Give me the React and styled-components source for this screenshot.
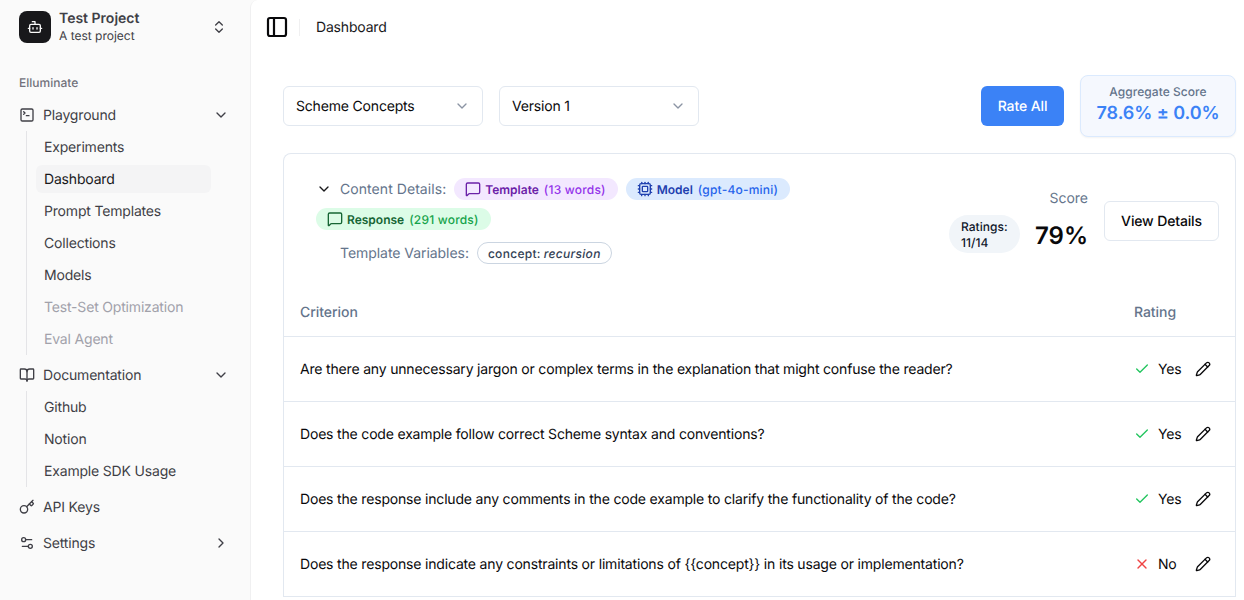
import styled, { createGlobalStyle } from "styled-components";
import {
  Bot,
  BookOpen,
  Check,
  ChevronDown,
  ChevronRight,
  ChevronsUpDown,
  Cpu,
  Key,
  MessageSquare,
  PanelLeft,
  Pencil,
  Settings2,
  SquareTerminal,
  X,
} from "lucide-react";

const GlobalStyle = createGlobalStyle`
  html, body {
    margin: 0;
    height: 600px;
    overflow: hidden;
    font-family: Inter, "Liberation Sans", sans-serif;
    font-size: 14px;
    letter-spacing: -0.18px;
    color: #09090b;
    background: #fafafa;
    text-rendering: geometricPrecision;
  }
  * { box-sizing: border-box; }
  button { text-rendering: geometricPrecision; }
`;

const Layout = styled.div`
  display: flex;
  width: 1244px;
  height: 600px;
  overflow: hidden;
`;

const Sidebar = styled.aside`
  width: 250px;
  flex-shrink: 0;
  padding: 8px;
  background: #fafafa;
`;

const ProjectButton = styled.div`
  display: flex;
  align-items: center;
  height: 38px;
  padding: 0 15px 0 11px;
  margin-bottom: 20px;
  svg { color: #3f3f46; }
`;

const ProjectLogo = styled.div`
  width: 32px;
  height: 32px;
  border-radius: 8px;
  background: #18181b;
  display: flex;
  align-items: center;
  justify-content: center;
  svg { color: #fafafa; }
`;

const ProjectText = styled.div`
  flex: 1;
  margin-left: 8px;
  line-height: 17px;
`;

const ProjectName = styled.div`
  font-size: 14px;
  font-weight: 600;
  letter-spacing: 0;
  color: #3f3f46;
`;

const ProjectSub = styled.div`
  font-size: 12px;
  letter-spacing: 0;
  color: #3f3f46;
`;

const GroupLabel = styled.div`
  height: 33px;
  padding: 0 11px;
  display: flex;
  align-items: center;
  font-size: 12px;
  font-weight: 500;
  letter-spacing: 0;
  color: #71717a;
`;

const Menu = styled.div`
  display: flex;
  flex-direction: column;
  gap: 4px;
`;

const MenuRow = styled.div`
  display: flex;
  align-items: center;
  height: 32px;
  padding: 0 13px 0 11px;
  gap: 8px;
  color: #3f3f46;
  svg { flex-shrink: 0; }
`;

const MenuLabel = styled.span`
  flex: 1;
`;

const SubList = styled.div`
  display: flex;
  flex-direction: column;
  margin: 0 31px 0 18px;
  padding-left: 9px;
  border-left: 1px solid #e4e4e7;
`;

const SubItem = styled.div`
  height: 28px;
  margin: 2px 0;
  display: flex;
  align-items: center;
  padding: 0 8px;
  border-radius: 6px;
  color: ${(p) => (p.$disabled ? "#a1a1aa" : p.$active ? "#18181b" : "#3f3f46")};
  background: ${(p) => (p.$active ? "#f4f4f5" : "transparent")};
`;

const Main = styled.main`
  flex: 1;
  min-width: 0;
  background: #fff;
  border-left: 1px solid #f0f0f1;
  border-top-left-radius: 8px;
`;

const TopBar = styled.header`
  display: flex;
  align-items: center;
  height: 54px;
  padding-left: 14px;
`;

const Divider = styled.div`
  width: 1px;
  height: 17px;
  background: #f0f0f1;
  margin: 0 16px 0 10px;
`;

const Crumb = styled.span`
  color: #18181b;
`;

const Content = styled.div`
  padding: 21px 8px 0 32px;
`;

const Toolbar = styled.div`
  display: flex;
  align-items: center;
  gap: 16px;
  margin-bottom: 16px;
`;

const Select = styled.div`
  width: 200px;
  height: 40px;
  display: flex;
  align-items: center;
  justify-content: space-between;
  padding: 0 12px;
  border: 1px solid #e2e8f0;
  border-radius: 6px;
  color: #09090b;
  svg { color: #8b94a3; }
`;

const ToolbarRight = styled.div`
  margin-left: auto;
  display: flex;
  align-items: center;
  gap: 16px;
`;

const PrimaryButton = styled.button`
  width: 83px;
  height: 40px;
  border: 0;
  border-radius: 6px;
  background: #3b82f6;
  color: #fff;
  font: 500 14px Inter, sans-serif;
  letter-spacing: -0.1px;
`;

const ScoreBox = styled.div`
  width: 156px;
  height: 62px;
  border: 1px solid #dbeafe;
  border-radius: 8px;
  background: #f5f8fe;
  box-shadow: 0 1px 2px rgba(0, 0, 0, 0.05);
  text-align: center;
  padding-top: 8px;
`;

const ScoreCaption = styled.div`
  font-size: 12px;
  line-height: 16px;
  font-weight: 500;
  letter-spacing: 0.05px;
  color: #64748b;
`;

const ScoreValue = styled.div`
  font-size: 18px;
  line-height: 28px;
  font-weight: 600;
  letter-spacing: -0.08px;
  color: #3b82f6;
`;

const Card = styled.section`
  border: 1px solid #e2e8f0;
  border-bottom: 0;
  border-radius: 8px 8px 0 0;
`;

const CardHead = styled.div`
  display: flex;
  align-items: center;
  padding: 24px 16px 24px 32px;
`;

const Details = styled.div`
  flex: 1;
  min-width: 0;
`;

const PillRow = styled.div`
  display: flex;
  flex-wrap: wrap;
  align-items: center;
  gap: 8px;
`;

const DetailLabel = styled.div`
  display: flex;
  align-items: center;
  gap: 8px;
  letter-spacing: 0.06px;
  color: #64748b;
  svg { color: #18181b; }
`;

const Pill = styled.div`
  display: flex;
  align-items: center;
  height: 22px;
  padding: 0 12px 0 11px;
  gap: 4px;
  border-radius: 11px;
  font-size: 12px;
  font-weight: 600;
  letter-spacing: 0;
  background: ${(p) => p.$bg};
  color: ${(p) => p.$strong};
`;

const PillNote = styled.span`
  font-weight: 500;
  letter-spacing: 0.2px;
  margin-left: 1px;
  color: ${(p) => p.$color};
`;

const VariableRow = styled.div`
  display: flex;
  align-items: center;
  gap: 8px;
  margin: 12px 0 0 24px;
  letter-spacing: -0.05px;
  color: #64748b;
`;

const VariablePill = styled.div`
  height: 22px;
  padding: 0 10px;
  display: flex;
  align-items: center;
  gap: 3px;
  border: 1px solid #cbd5e1;
  border-radius: 11px;
  font-size: 12px;
  font-weight: 500;
  letter-spacing: 0.3px;
  color: #334155;
  em { font-style: italic; }
`;

const Summary = styled.div`
  display: flex;
  align-items: center;
`;

const RatingsPill = styled.div`
  width: 71px;
  height: 38px;
  margin-top: 26px;
  padding: 4px 0 0 12px;
  border-radius: 19px;
  background: #f1f5f9;
  font-size: 12px;
  line-height: 16px;
  font-weight: 500;
  letter-spacing: 0.05px;
  color: #0f172a;
`;

const ScoreCol = styled.div`
  margin: 0 16px 0 15px;
  padding-bottom: 1px;
  text-align: right;
`;

const ScoreLabel = styled.div`
  color: #64748b;
  line-height: 20px;
  letter-spacing: 0;
  margin-bottom: 11px;
`;

const ScorePercent = styled.div`
  font-size: 24px;
  line-height: 32px;
  font-weight: 600;
  letter-spacing: 0;
  color: #09090b;
`;

const OutlineButton = styled.button`
  width: 115px;
  height: 40px;
  border: 1px solid #e2e8f0;
  border-radius: 6px;
  background: #fff;
  color: #09090b;
  font: 500 14px Inter, sans-serif;
  letter-spacing: -0.14px;
`;

const Table = styled.div`
  display: flex;
  flex-direction: column;
`;

const TableHead = styled.div`
  display: grid;
  grid-template-columns: 1fr 101px;
  align-items: center;
  height: 49px;
  padding-left: 16px;
  color: #64748b;
  font-weight: 500;
  letter-spacing: -0.05px;
  border-bottom: 1px solid #e2e8f0;
`;

const TableRow = styled.div`
  display: grid;
  grid-template-columns: 1fr 101px;
  align-items: center;
  height: 65px;
  padding-left: 16px;
  border-bottom: 1px solid #e2e8f0;
  color: #09090b;
`;

const RatingCell = styled.div`
  display: flex;
  align-items: center;
  color: #09090b;
`;

const RatingIcon = styled.span`
  display: flex;
  width: 24px;
  color: ${(p) => (p.$yes ? "#22c55e" : "#ef4444")};
`;

const RatingText = styled.span`
  width: 37px;
`;

const criteria = [
  ["Are there any unnecessary jargon or complex terms in the explanation that might confuse the reader?", true],
  ["Does the code example follow correct Scheme syntax and conventions?", true],
  ["Does the response include any comments in the code example to clarify the functionality of the code?", true],
  ["Does the response indicate any constraints or limitations of {{concept}} in its usage or implementation?", false],
];

export default function App() {
  return (
    <Layout>
      <GlobalStyle />
      <Sidebar>
        <ProjectButton>
          <ProjectLogo>
            <Bot size={16} />
          </ProjectLogo>
          <ProjectText>
            <ProjectName>Test Project</ProjectName>
            <ProjectSub>A test project</ProjectSub>
          </ProjectText>
          <ChevronsUpDown size={16} />
        </ProjectButton>
        <GroupLabel>Elluminate</GroupLabel>
        <Menu>
          <div>
            <MenuRow>
              <SquareTerminal size={16} />
              <MenuLabel>Playground</MenuLabel>
              <ChevronDown size={16} />
            </MenuRow>
            <SubList>
              <SubItem>Experiments</SubItem>
              <SubItem $active>Dashboard</SubItem>
              <SubItem>Prompt Templates</SubItem>
              <SubItem>Collections</SubItem>
              <SubItem>Models</SubItem>
              <SubItem $disabled>Test-Set Optimization</SubItem>
              <SubItem $disabled>Eval Agent</SubItem>
            </SubList>
          </div>
          <div>
            <MenuRow>
              <BookOpen size={16} />
              <MenuLabel>Documentation</MenuLabel>
              <ChevronDown size={16} />
            </MenuRow>
            <SubList>
              <SubItem>Github</SubItem>
              <SubItem>Notion</SubItem>
              <SubItem>Example SDK Usage</SubItem>
            </SubList>
          </div>
          <MenuRow>
            <Key size={16} />
            <MenuLabel>API Keys</MenuLabel>
          </MenuRow>
          <MenuRow>
            <Settings2 size={16} />
            <MenuLabel>Settings</MenuLabel>
            <ChevronRight size={16} />
          </MenuRow>
        </Menu>
      </Sidebar>
      <Main>
        <TopBar>
          <PanelLeft size={24} strokeWidth={2.2} />
          <Divider />
          <Crumb>Dashboard</Crumb>
        </TopBar>
        <Content>
          <Toolbar>
            <Select>
              Scheme Concepts
              <ChevronDown size={16} />
            </Select>
            <Select>
              Version 1
              <ChevronDown size={16} />
            </Select>
            <ToolbarRight>
              <PrimaryButton>Rate All</PrimaryButton>
              <ScoreBox>
                <ScoreCaption>Aggregate Score</ScoreCaption>
                <ScoreValue>78.6% ± 0.0%</ScoreValue>
              </ScoreBox>
            </ToolbarRight>
          </Toolbar>
          <Card>
            <CardHead>
              <Details>
                <PillRow>
                  <DetailLabel>
                    <ChevronDown size={16} />
                    Content Details:
                  </DetailLabel>
                  <Pill $bg="#f3e8ff" $strong="#6b21a8">
                    <MessageSquare size={16} />
                    Template
                    <PillNote $color="#9333ea">(13 words)</PillNote>
                  </Pill>
                  <Pill $bg="#dbeafe" $strong="#1e40af">
                    <Cpu size={16} />
                    Model
                    <PillNote $color="#2563eb">(gpt-4o-mini)</PillNote>
                  </Pill>
                  <Pill $bg="#dcfce7" $strong="#166534">
                    <MessageSquare size={16} />
                    Response
                    <PillNote $color="#16a34a">(291 words)</PillNote>
                  </Pill>
                </PillRow>
                <VariableRow>
                  Template Variables:
                  <VariablePill>
                    concept: <em>recursion</em>
                  </VariablePill>
                </VariableRow>
              </Details>
              <Summary>
                <RatingsPill>
                  Ratings:
                  <br />
                  11/14
                </RatingsPill>
                <ScoreCol>
                  <ScoreLabel>Score</ScoreLabel>
                  <ScorePercent>79%</ScorePercent>
                </ScoreCol>
                <OutlineButton>View Details</OutlineButton>
              </Summary>
            </CardHead>
            <Table>
              <TableHead>
                <span>Criterion</span>
                <span>Rating</span>
              </TableHead>
              {criteria.map(([text, yes]) => (
                <TableRow key={text}>
                  <span>{text}</span>
                  <RatingCell>
                    <RatingIcon $yes={yes}>{yes ? <Check size={16} /> : <X size={16} />}</RatingIcon>
                    <RatingText>{yes ? "Yes" : "No"}</RatingText>
                    <Pencil size={16} />
                  </RatingCell>
                </TableRow>
              ))}
            </Table>
          </Card>
        </Content>
      </Main>
    </Layout>
  );
}
